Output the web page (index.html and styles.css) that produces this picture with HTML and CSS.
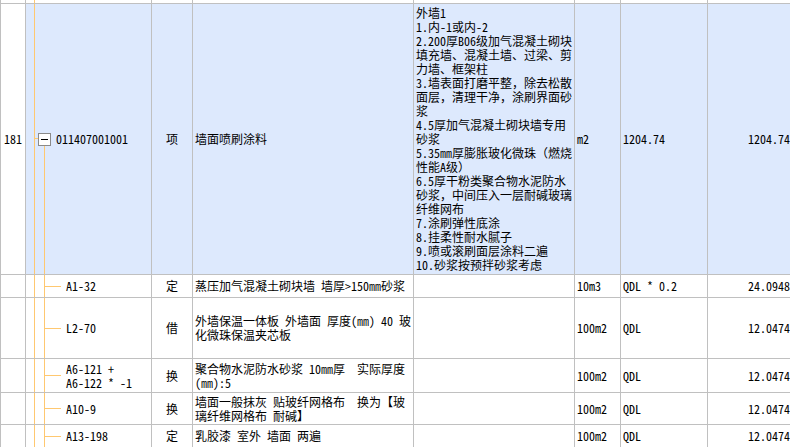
FILE: index.html
```html
<!DOCTYPE html>
<html lang="zh">
<head>
<meta charset="utf-8">
<title>清单</title>
<link rel="stylesheet" href="styles.css">
</head>
<body>
<div class="sheet">
  <div class="row r-top">
    <div class="cell white"></div>
    <div class="cell tree-top"></div>
    <div class="cell"></div>
    <div class="cell"></div>
    <div class="cell"></div>
    <div class="cell"></div>
    <div class="cell"></div>
    <div class="cell"></div>
  </div>

  <div class="row r-main sel">
    <div class="cell white num">181</div>
    <div class="cell code-main"><span class="minus"></span><span>011407001001</span></div>
    <div class="cell center">项</div>
    <div class="cell">墙面喷刷涂料</div>
    <div class="cell desc">外墙1<br>1.内-1或内-2<br>2.200厚B06级加气混凝土砌块<br>填充墙、混凝土墙、过梁、剪<br>力墙、框架柱<br>3.墙表面打磨平整，除去松散<br>面层，清理干净，涂刷界面砂<br>浆<br>4.5厚加气混凝土砌块墙专用<br>砂浆<br>5.35㎜厚膨胀玻化微珠（燃烧<br>性能A级）<br>6.5厚干粉类聚合物水泥防水<br>砂浆，中间压入一层耐碱玻璃<br>纤维网布<br>7.涂刷弹性底涂<br>8.挂柔性耐水腻子<br>9.喷或滚刷面层涂料二遍<br>10.砂浆按预拌砂浆考虑</div>
    <div class="cell">m2</div>
    <div class="cell">1204.74</div>
    <div class="cell right">1204.74</div>
  </div>

  <div class="row r-1">
    <div class="cell white"></div>
    <div class="cell tree-child">A1-32</div>
    <div class="cell center">定</div>
    <div class="cell">蒸压加气混凝土砌块墙 墙厚&gt;150㎜砂浆</div>
    <div class="cell"></div>
    <div class="cell">10m3</div>
    <div class="cell">QDL * 0.2</div>
    <div class="cell right">24.0948</div>
  </div>

  <div class="row r-2">
    <div class="cell white"></div>
    <div class="cell tree-child">L2-70</div>
    <div class="cell center">借</div>
    <div class="cell">外墙保温一体板 外墙面 厚度(㎜) 40 玻<br>化微珠保温夹芯板</div>
    <div class="cell"></div>
    <div class="cell">100m2</div>
    <div class="cell">QDL</div>
    <div class="cell right">12.0474</div>
  </div>

  <div class="row r-3">
    <div class="cell white"></div>
    <div class="cell tree-child">A6-121 +<br>A6-122 * -1</div>
    <div class="cell center">换</div>
    <div class="cell">聚合物水泥防水砂浆 10㎜厚&nbsp;&nbsp;实际厚度<br>(㎜):5</div>
    <div class="cell"></div>
    <div class="cell">100m2</div>
    <div class="cell">QDL</div>
    <div class="cell right">12.0474</div>
  </div>

  <div class="row r-4">
    <div class="cell white"></div>
    <div class="cell tree-child">A10-9</div>
    <div class="cell center">换</div>
    <div class="cell">墙面一般抹灰 贴玻纤网格布&nbsp;&nbsp;换为【玻<br>璃纤维网格布 耐碱】</div>
    <div class="cell"></div>
    <div class="cell">100m2</div>
    <div class="cell">QDL</div>
    <div class="cell right">12.0474</div>
  </div>

  <div class="row r-5">
    <div class="cell white"></div>
    <div class="cell tree-child">A13-198</div>
    <div class="cell center">定</div>
    <div class="cell">乳胶漆 室外 墙面 两遍</div>
    <div class="cell"></div>
    <div class="cell">100m2</div>
    <div class="cell">QDL</div>
    <div class="cell right">12.0474</div>
  </div>
</div>
</body>
</html>
```

FILE: styles.css
```css
html, body {
  margin: 0;
  padding: 0;
  background: #ffffff;
  overflow: hidden;
}

body {
  font-family: "Noto Sans Mono CJK SC", "Noto Sans CJK SC", "DejaVu Sans", sans-serif;
  font-size: 12px;
  line-height: 14px;
  color: #000000;
}

.sheet {
  --grid: #c0c0c0;
  --orange: #ffc870;
  --sel: #dde9fd;
  width: 792px;
  border-left: 1px solid var(--grid);
}

.row {
  display: grid;
  grid-template-columns: 25px 126px 41px 221px 161px 46px 87px 84px;
}

.r-top { height: 4px; }
.r-main { height: 271px; }
.r-1 { height: 23px; }
.r-2 { height: 61px; }
.r-3 { height: 34px; }
.r-4 { height: 32px; }
.r-5 { height: 23px; }

.cell {
  box-sizing: border-box;
  border-right: 1px solid var(--grid);
  border-bottom: 1px solid var(--grid);
  display: flex;
  align-items: center;
  padding: 0 2px;
  overflow: hidden;
  white-space: nowrap;
}

.sel .cell { background-color: var(--sel); }
.sel .cell.white, .cell.white { background-color: #ffffff; }

.num { padding-left: 3px; }

.center { justify-content: center; padding: 0; }
.right { justify-content: flex-end; padding-right: 1px; }

.desc { padding-left: 2px; }

.tree-top {
  background-image: linear-gradient(var(--orange), var(--orange));
  background-repeat: no-repeat;
  background-size: 1px 100%;
  background-position: 8px 0;
}

.code-main {
  padding-left: 12px;
  background-image:
    linear-gradient(var(--orange), var(--orange)),
    linear-gradient(var(--orange), var(--orange)),
    linear-gradient(var(--orange), var(--orange));
  background-repeat: no-repeat;
  background-size: 1px 100%, 1px 100%, 3px 1px;
  background-position: 8px 0, 18px 141px, 9px 134px;
}

.minus {
  box-sizing: border-box;
  width: 13px;
  height: 13px;
  border: 1px solid #8a8a8a;
  background: #ffffff;
  margin-right: 5px;
  display: flex;
  align-items: center;
  justify-content: center;
  flex: none;
}

.minus::after {
  content: "";
  width: 7px;
  height: 1px;
  background: #000000;
}

.tree-child {
  padding-left: 40px;
  background-image:
    linear-gradient(var(--orange), var(--orange)),
    linear-gradient(var(--orange), var(--orange)),
    linear-gradient(var(--orange), var(--orange));
  background-repeat: no-repeat;
  background-size: 1px 100%, 1px 100%, 17px 1px;
  background-position: 8px 0, 18px 0, 18px 50%;
}
```
